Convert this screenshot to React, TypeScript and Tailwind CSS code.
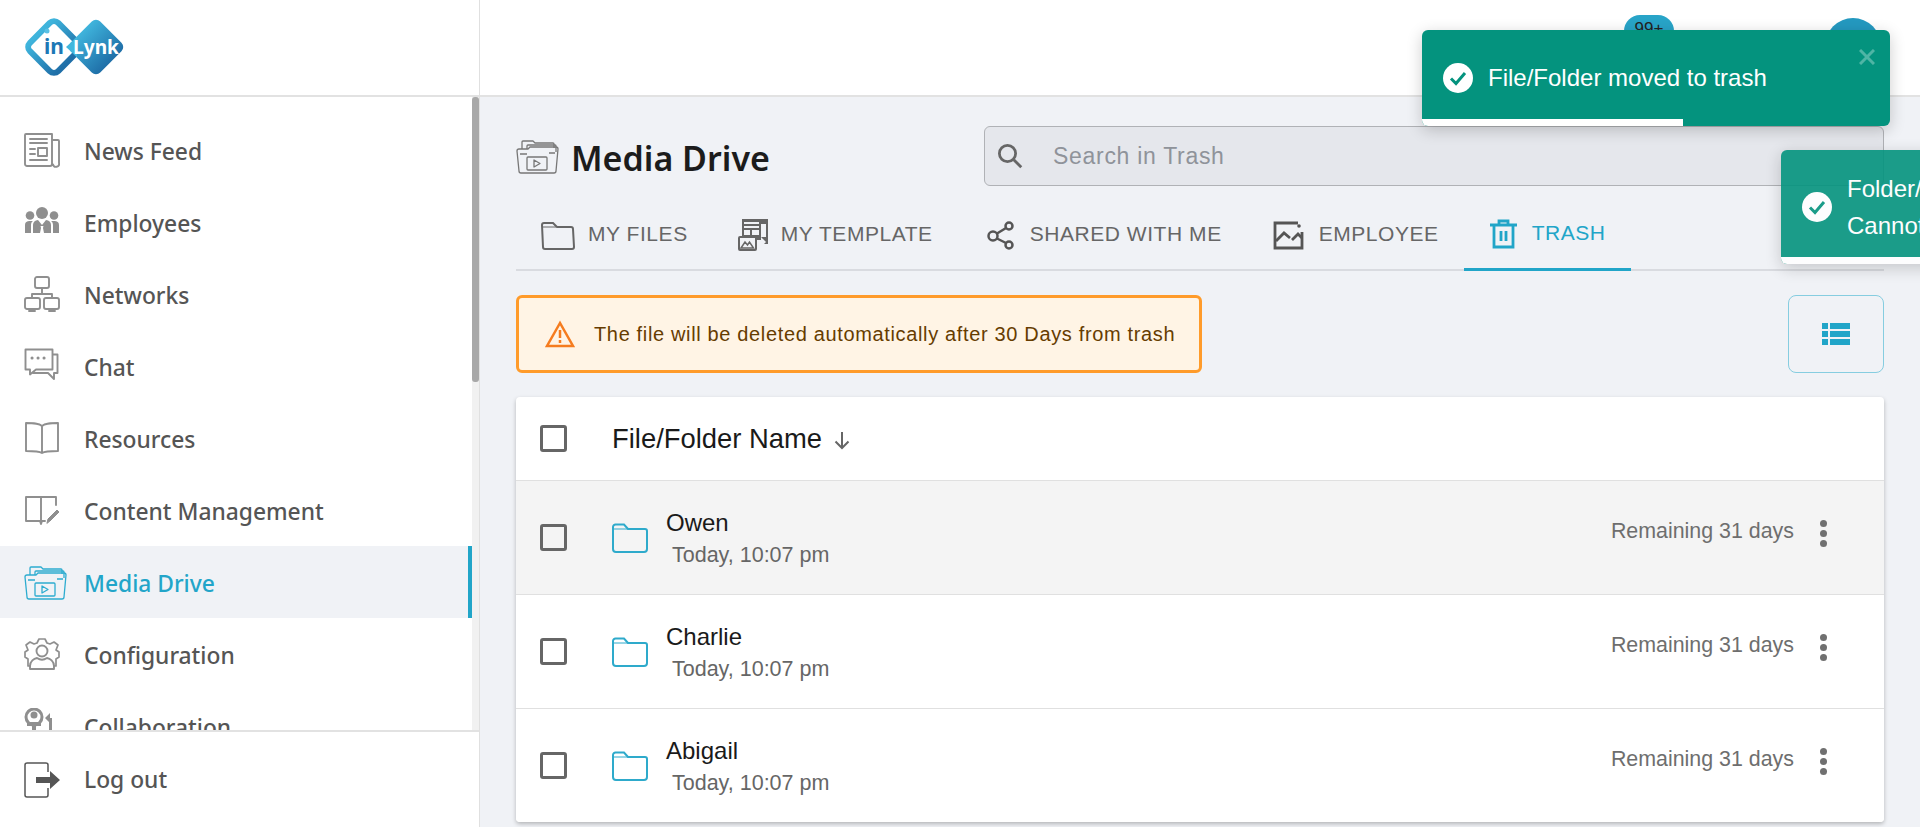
import React from "react";

const sans = "font-['Noto_Sans','Open_Sans',sans-serif]";

function Logo() {
  return (
    <svg width="102" height="60" viewBox="0 0 102 60" className="block">
      <defs>
        <linearGradient id="lg1" x1="0" x2="1"><stop offset="0" stopColor="#3fb4dc" /><stop offset="1" stopColor="#1f6fa8" /></linearGradient>
      </defs>
      <rect x="10" y="10" width="40" height="40" rx="6" transform="rotate(45 30 30)" fill="#fff" stroke="url(#lg1)" strokeWidth="6" />
      <rect x="51" y="9" width="42" height="42" rx="6" transform="rotate(45 72 30)" fill="url(#lg1)" />
      <path d="M42 30 L53 20 V40 Z" fill="#42b7dd" />
      <text x="20" y="37" fontSize="21" fontWeight="700" fill="#1d78b5" fontFamily="Noto Sans, sans-serif">in</text>
      <text x="49" y="37" fontSize="19.500" fontWeight="700" fill="#fff" fontFamily="Noto Sans, sans-serif" textLength="46" lengthAdjust="spacingAndGlyphs">Lynk</text>
      <circle cx="23" cy="14" r="2.500" fill="#59c0e4" />
    </svg>
  );
}

const G = ({ children, className = "", w = 36, h = 36, vb = "0 0 36 36" }: any) => (
  <svg width={w} height={h} viewBox={vb} fill="none" stroke="currentColor" strokeWidth="1.6" strokeLinejoin="round" strokeLinecap="round" className={"shrink-0 " + className}>
    {children}
  </svg>
);

const NewsIcon = () => (
  <G>
    <path d="M28 5.500V32a2 2 0 0 1-2 2H3a2 2 0 0 1-2-2V3a1 1 0 0 1 1-1h26v3.500M28 8h6a1 1 0 0 1 1 1v22a3 3 0 0 1-6 1.500" strokeWidth="1.900" />
    <path d="M6 7h17M6 11h17M6 17h5M6 22h5M6 28h17" strokeWidth="1.900" />
    <rect x="14" y="16" width="9" height="8" strokeWidth="1.900" />
  </G>
);
const PeopleIcon = () => (
  <svg width="36" height="36" viewBox="0 0 36 36" fill="currentColor" className="shrink-0">
    <circle cx="18" cy="9" r="6" /><circle cx="6" cy="11.500" r="4.300" /><circle cx="30" cy="11.500" r="4.300" />
    <path d="M1 29v-8c0-3 2-4 4.500-4H9c-1.500 1-2 2.500-2 4v8ZM35 29v-8c0-3-2-4-4.500-4H27c1.500 1 2 2.500 2 4v8ZM9 29v-8c0-3 2-4.500 5-5l4 5 4-5c3 .5 5 2 5 5v8H20l-1-5 .5-2h-3l.5 2-1 5Z" />
  </svg>
);
const NetIcon = () => (
  <G>
    <rect x="11" y="1" width="14" height="11" rx="2" strokeWidth="1.900" />
    <rect x="1" y="22" width="15" height="11" rx="2" strokeWidth="1.900" />
    <rect x="20" y="22" width="15" height="11" rx="2" strokeWidth="1.900" />
    <path d="M18 12v6M8 22v-4h20v4M5 35h6M25 35h6" strokeWidth="1.900" />
  </G>
);
const ChatIcon = () => (
  <G>
    <path d="M1.500 1.500h27v20H12l-6 5v-5H1.500Z" strokeWidth="1.900" />
    <path d="M29 6.500h4.500V25H30v6l-6-6H9" strokeWidth="1.900" />
    <path d="M8 10h.1M14 10h.1M20 10h.1" strokeWidth="3" />
  </G>
);
const BookIcon = () => (
  <G>
    <path d="M18 6c-3-3-9-3-16-3v28c7 0 13 0 16 2 3-2 9-2 16-2V3c-7 0-13 0-16 3Zm0 0v27" strokeWidth="1.900" />
  </G>
);
const ContentIcon = () => (
  <G>
    <path d="M17 5v27M17 5H2v24h14l1 3 1-3h3M17 5h15v8" strokeWidth="1.900" />
    <path d="M23 31l1-4 9-9 2 2-9 9Z" fill="currentColor" strokeWidth="1" />
  </G>
);
const MediaIcon = ({ className = "", w = 43, h = 36 }: any) => (
  <svg width={w} height={h} viewBox="0 0 43 36" fill="none" stroke="currentColor" strokeWidth="1.300" strokeLinejoin="round" className={"shrink-0 " + className}>
    <path d="M6 11V4a1 1 0 0 1 1-1h10l2 2h18a1 1 0 0 1 1 1v4" />
    <path d="M11 11V8a1 1 0 0 1 1-1h27a1 1 0 0 1 1 1v6" />
    <path d="M1 13a2 2 0 0 1 2-2h9l2-2h26a2 2 0 0 1 2 2l-2 22a2 2 0 0 1-2 2H5a2 2 0 0 1-2-2Z" />
    <rect x="11" y="19" width="20" height="13" rx="1" />
    <path d="M18 22l6 3.500-6 3.500Z" />
    <path d="M4 16h7M33 15l6 0" />
  </svg>
);
const ConfigIcon = () => (
  <G>
    <path d="M6 30H4v-7l-3-2v-5l3-2-2-5 4-3 4 2 3-1 2-4h6l2 4 3 1 4-2 4 3-2 5 3 2v5l-3 2v7h-2" strokeWidth="1.700" />
    <circle cx="18" cy="15" r="5.500" strokeWidth="1.900" />
    <path d="M6 33v-3c0-5 4-7.500 7-8 3 2 7 2 10 0 3 .5 7 3 7 8v3Z" strokeWidth="1.900" />
  </G>
);
const CollabIcon = () => (
  <svg width="36" height="36" viewBox="0 0 36 36" fill="currentColor" className="shrink-0">
    <circle cx="10" cy="9" r="8" fill="none" stroke="currentColor" strokeWidth="3" />
    <circle cx="10" cy="7" r="3.500" />
    <path d="M3 14h14v4H3ZM8 18h4v8H8ZM25 10h3v13h-3ZM21 10l5-5v10Z" />
    <circle cx="26" cy="31" r="8" />
  </svg>
);
const LogoutIcon = () => (
  <svg width="36" height="36" viewBox="0 0 36 36" fill="none" className="shrink-0 text-[#555]">
    <path d="M24 10V3a2 2 0 0 0-2-2H3a2 2 0 0 0-2 2v30a2 2 0 0 0 2 2h19a2 2 0 0 0 2-2v-7" stroke="currentColor" strokeWidth="1.500" />
    <path d="M12 15h14v-6l10 9-10 9v-6H12Z" fill="currentColor" />
  </svg>
);

const nav = [
  ["News Feed", NewsIcon],
  ["Employees", PeopleIcon],
  ["Networks", NetIcon],
  ["Chat", ChatIcon],
  ["Resources", BookIcon],
  ["Content Management", ContentIcon],
  ["Media Drive", null],
  ["Configuration", ConfigIcon],
  ["Collaboration", CollabIcon],
] as const;

function Sidebar() {
  return (
    <aside className="w-[480px] h-[827px] shrink-0 flex flex-col bg-white border-r border-[#e0e0e0]">
      <div className="h-[97px] shrink-0 border-b-2 border-[#e2e2e2] pl-[24px] pt-[17px]">
        <Logo />
      </div>
      <div className="relative flex-1 overflow-hidden pt-[17px] pr-[7px]">
        {nav.map(([label, Icon]) => {
          const active = label === "Media Drive";
          return (
            <div key={label} className={"h-[72px] shrink-0 flex items-center pl-[24px] " + (active ? "bg-[#f0f2f6] border-r-4 border-[#21a5c8]" : "")}>
              <span className={"w-[60px] " + (active ? "text-[#2dacd0]" : "text-[#8f8f8f]")}>
                {Icon ? <Icon /> : <MediaIcon />}
              </span>
              <span className={sans + " text-[22.800px] font-medium leading-none mt-[4px] " + (active ? "text-[#22a5c9]" : "text-[#555]")}>{label}</span>
            </div>
          );
        })}
        <div className="absolute top-0 right-0 bottom-0 w-[7px] bg-[#f1f1f1]">
          <div className="h-[285px] bg-[#a8a8a8] rounded-[3px]" />
        </div>
      </div>
      <div className="h-[97px] shrink-0 border-t-2 border-[#e2e2e2] flex items-center pl-[24px]">
        <span className="w-[60px]"><LogoutIcon /></span>
        <span className={sans + " text-[22.800px] font-medium text-[#555] leading-none mt-[2px]"}>Log out</span>
      </div>
    </aside>
  );
}

function Header() {
  return (
    <header className="relative h-[97px] shrink-0 bg-white border-b-2 border-[#e2e2e2]">
      <div className="absolute left-[1144px] top-[15px] w-[50px] h-[32px] rounded-[16px] bg-[#28a4c8] text-center text-[17px] text-[#222] leading-[28px]">99+</div>
      <div className="absolute left-[1345px] top-[18px] w-[56px] h-[56px] rounded-full bg-[#2499c0]" />
    </header>
  );
}

const FolderTab = () => (
  <svg width="34" height="30" viewBox="0 0 34 30" fill="none" stroke="#666" strokeWidth="2" className="shrink-0">
    <path d="M1 5a2 2 0 0 1 2-2h9l4 4h14a2 2 0 0 1 2 2l1 18a2 2 0 0 1-2 2H4a2 2 0 0 1-2-2Z" />
    <path d="M1 7h14" strokeWidth="1" />
  </svg>
);
const TemplateTab = () => (
  <svg width="30" height="32" viewBox="0 0 30 32" className="shrink-0">
    <rect x="4" y="0" width="26" height="25" fill="#666" />
    <rect x="6" y="3" width="15" height="2" fill="#f0f2f6" />
    <rect x="6" y="7" width="15" height="2" fill="#f0f2f6" />
    <rect x="6" y="11" width="6" height="5" fill="#f0f2f6" />
    <rect x="14" y="11" width="7" height="5" fill="#f0f2f6" />
    <rect x="23" y="5" width="5" height="13" fill="#f0f2f6" />
    <rect x="1" y="18" width="17" height="13" rx="1" fill="#f0f2f6" stroke="#666" strokeWidth="2" />
    <path d="M3 29l4-6 2.500 3 2-3 4 6Z" fill="none" stroke="#666" strokeWidth="1.500" />
    <path d="M19 21h4v-3l5 5-5 5v-3h-4Z" fill="#f0f2f6" />
  </svg>
);
const ShareTab = () => (
  <svg width="34" height="30" viewBox="0 0 34 30" fill="none" stroke="#555" strokeWidth="2.500" className="shrink-0">
    <circle cx="10" cy="16" r="4.500" /><circle cx="26" cy="6" r="3.500" /><circle cx="26" cy="25" r="3.500" />
    <path d="M14 13.500L23 8M14 18.500L23 23" />
  </svg>
);
const EmployeeTab = () => (
  <svg width="34" height="30" viewBox="0 0 34 30" fill="none" stroke="#555" strokeWidth="2.800" className="shrink-0">
    <path d="M26 3H3v25h27V12" />
    <path d="M4 21l8-8 6 5M20 20l6-6 4 4" />
    <circle cx="27" cy="6" r="1.800" fill="#555" stroke="none" />
  </svg>
);
const TrashTab = () => (
  <svg width="30" height="30" viewBox="0 0 30 30" fill="none" stroke="#21a5c8" strokeWidth="2.800" className="shrink-0">
    <path d="M1 6h27M10 6V2h9v4" />
    <path d="M5 6v22h19V6" />
    <path d="M12 12v10M17 12v10" />
  </svg>
);

const tabs = [
  ["MY FILES", FolderTab],
  ["MY TEMPLATE", TemplateTab],
  ["SHARED WITH ME", ShareTab],
  ["EMPLOYEE", EmployeeTab],
  ["TRASH", TrashTab],
] as const;

function Tabs() {
  return (
    <div className="flex h-[72px] border-b-2 border-[#d9dbe0] mt-[13px]">
      {tabs.map(([label, Icon]) => {
        const active = label === "TRASH";
        return (
          <div key={label} className={"flex items-center gap-[13px] px-[25px] h-[72px] " + (active ? "border-b-[3px] border-[#21a5c8]" : "")}>
            <Icon />
            <span className={"text-[21px] tracking-[0.55px] -mt-[2px] " + (active ? "text-[#21a5c8]" : "text-[#666]")}>{label}</span>
          </div>
        );
      })}
    </div>
  );
}

function Check() {
  return <span className="block w-[27px] h-[27px] border-[3px] border-[#666] rounded-[3px] shrink-0" />;
}

const RowFolder = () => (
  <svg width="36" height="30" viewBox="0 0 36 30" fill="none" stroke="#2eaacb" strokeWidth="2" className="shrink-0">
    <path d="M1 4a2.500 2.500 0 0 1 2.500-2.500H12L16 6h17a2 2 0 0 1 2 2v18a3 3 0 0 1-3 3H4a3 3 0 0 1-3-3Z" />
    <path d="M1 6h15" strokeWidth="1" />
  </svg>
);

function Row({ name, hover }: { name: string; hover?: boolean }) {
  return (
    <div className={"h-[114px] flex items-center pl-[24px] pr-[57px] border-t border-[#e0e0e0] " + (hover ? "bg-[#f4f4f4]" : "bg-white")}>
      <Check />
      <span className="ml-[45px] mr-[18px]"><RowFolder /></span>
      <div className="flex-1">
        <div className="text-[24px] leading-[28px] text-[#1a1a1a]">{name}</div>
        <div className="text-[21.500px] leading-[24px] text-[#666] ml-[6px] mt-[6px]">Today, 10:07 pm</div>
      </div>
      <span className="text-[21.400px] text-[#6e6e6e] -mt-[12px]">Remaining 31 days</span>
      <div className="ml-[26px] flex flex-col gap-[3px] -mt-[8px]">
        <span className="block w-[7px] h-[7px] rounded-full bg-[#707070]" />
        <span className="block w-[7px] h-[7px] rounded-full bg-[#707070]" />
        <span className="block w-[7px] h-[7px] rounded-full bg-[#707070]" />
      </div>
    </div>
  );
}

const ToastCheck = () => (
  <svg width="30" height="30" viewBox="0 0 30 30" className="shrink-0">
    <circle cx="15" cy="15" r="15" fill="#fff" />
    <path d="M8 15.500l5 5L22 10" fill="none" stroke="#04937e" strokeWidth="3" />
  </svg>
);

export default function App() {
  return (
    <div className="relative flex w-[1920px] h-[827px] overflow-hidden bg-[#f0f2f6] font-['Liberation_Sans',Arial,sans-serif]">
      <Sidebar />
      <main className="flex-1 flex flex-col min-w-0">
        <Header />
        <div className="pl-[36px] pr-[36px] pt-[29px]">
          <div className="flex items-center h-[60px]">
            <span className="text-[#777] w-[55px]"><MediaIcon /></span>
            <h1 className={sans + " text-[34px] font-semibold text-[#1c1c1c] w-[413px] leading-none mt-[4px]"}>Media Drive</h1>
            <div className="flex-1 h-[60px] flex items-center bg-[#e5e7ec] border border-[#b0b2b6] rounded-[6px] pl-[10px]">
              <svg width="30" height="30" viewBox="0 0 24 24" fill="none" stroke="#666" strokeWidth="2.200">
                <circle cx="10" cy="10" r="6.500" /><path d="M15 15l6 6" />
              </svg>
              <span className="ml-[28px] text-[23px] tracking-[0.7px] text-[#8f939a]">Search in Trash</span>
            </div>
          </div>
          <Tabs />
          <div className="flex justify-between mt-[24px]">
            <div className="w-[686px] h-[78px] flex items-center bg-[#fff4e5] border-[3px] border-[#ff9b2a] rounded-[6px] pl-[26px]">
              <svg width="30" height="28" viewBox="0 0 30 28" fill="none" stroke="#f57c1f" strokeWidth="2.500" strokeLinejoin="miter">
                <path d="M15 3L2 26h26Z" /><path d="M15 10v8M15 20v3" />
              </svg>
              <span className="ml-[19px] text-[20px] tracking-[0.65px] text-[#663c00]">The file will be deleted automatically after 30 Days from trash</span>
            </div>
            <div className="w-[96px] h-[78px] flex items-center justify-center border border-[#86cde0] rounded-[8px]">
              <svg width="28" height="22" viewBox="0 0 28 22" fill="#21a5c8">
                <rect width="6" height="6" /><rect x="8" width="20" height="6" />
                <rect y="8" width="6" height="6" /><rect x="8" y="8" width="20" height="6" />
                <rect y="16" width="6" height="6" /><rect x="8" y="16" width="20" height="6" />
              </svg>
            </div>
          </div>
          <div className="mt-[24px] bg-white rounded-[4px] shadow-[0_2px_4px_rgba(0,0,0,0.25)] overflow-hidden">
            <div className="h-[83px] flex items-center pl-[24px]">
              <Check />
              <span className="ml-[45px] text-[27.400px] text-[#1a1a1a]">File/Folder Name</span>
              <svg width="24" height="24" viewBox="0 0 24 24" fill="none" stroke="#666" strokeWidth="2" className="ml-[8px] mt-[2px]">
                <path d="M12 4v16M5.500 13.500L12 20l6.500-6.500" />
              </svg>
            </div>
            <Row name="Owen" hover />
            <Row name="Charlie" />
            <Row name="Abigail" />
          </div>
        </div>
      </main>

      <div className="absolute left-[1422px] top-[30px] w-[468px] h-[96px] rounded-[6px] bg-[#04937e] shadow-[0_4px_16px_rgba(0,0,0,0.2)] overflow-hidden">
        <div className="flex items-center h-[96px] pl-[21px]">
          <ToastCheck />
          <span className="ml-[15px] text-[24px] text-white">File/Folder moved to trash</span>
        </div>
        <div className="absolute left-[437px] top-[19px] text-[#4fb5a5]">
          <svg width="16" height="16" viewBox="0 0 16 16" stroke="currentColor" strokeWidth="3"><path d="M1 1l14 14M15 1L1 15" /></svg>
        </div>
        <div className="absolute left-0 bottom-0 w-[261px] h-[7px] bg-white" />
      </div>

      <div className="absolute left-[1781px] top-[150px] w-[468px] h-[114px] rounded-[6px] bg-[#04937e] opacity-90 shadow-[0_4px_16px_rgba(0,0,0,0.2)] overflow-hidden">
        <div className="flex items-center h-[114px] pl-[21px]">
          <ToastCheck />
          <div className="ml-[15px] text-[24px] leading-[37px] text-white">
            <div>Folder/File moved to trash</div>
            <div>Cannot be restored</div>
          </div>
        </div>
        <div className="absolute left-0 bottom-0 w-full h-[7px] bg-white" />
      </div>
    </div>
  );
}
